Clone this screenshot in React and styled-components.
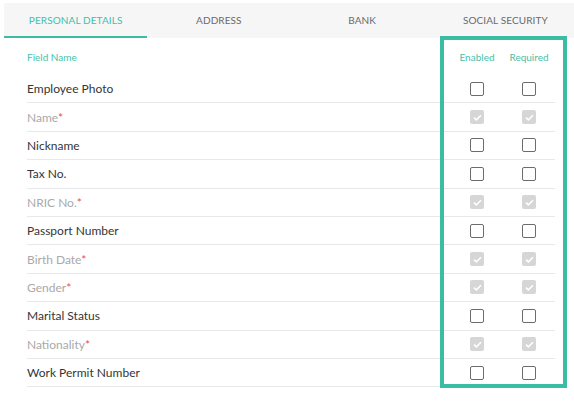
import styled, { createGlobalStyle } from "styled-components";

const GlobalStyle = createGlobalStyle`
  html, body {
    margin: 0;
    padding: 0;
    background: #ffffff;
    overflow: hidden;
  }
  body {
    font-family: Lato, "Noto Sans", sans-serif;
  }
`;

const Page = styled.div`
  position: relative;
  width: 574px;
  height: 401px;
  padding: 3px 0 0 4px;
  box-sizing: border-box;
`;

const TabBar = styled.div`
  display: flex;
  width: 573px;
  height: 35px;
  background: #f6f6f6;
`;

const Tab = styled.div`
  flex: 1;
  display: flex;
  align-items: center;
  justify-content: center;
  font-size: 10px;
  letter-spacing: 0.1px;
  text-transform: uppercase;
  color: ${({ $active }) => ($active ? "#3fc0a8" : "#6a6a6a")};
  border-bottom: 2px solid ${({ $active }) => ($active ? "#3bbca5" : "transparent")};
  box-sizing: border-box;
`;

const Table = styled.div`
  margin: 0 19px 0 23px;
`;

const HeaderRow = styled.div`
  display: grid;
  grid-template-columns: 1fr 52px 52px;
  align-items: center;
  height: 37px;
  font-size: 10px;
  color: #45c1aa;
`;

const HeadCell = styled.div`
  text-align: ${({ $center }) => ($center ? "center" : "left")};
`;

const Row = styled.div`
  display: grid;
  grid-template-columns: 1fr 52px 52px;
  align-items: center;
  height: 28.4px;
  box-sizing: border-box;
  border-bottom: 1px solid #e6e8ec;
`;

const Label = styled.div`
  font-size: 12px;
  color: ${({ $mandatory }) => ($mandatory ? "#a9a9a9" : "#353535")};
`;

const Star = styled.span`
  color: #f04d4d;
`;

const Cell = styled.div`
  display: flex;
  justify-content: center;
`;

const Box = styled.div`
  width: 14px;
  height: 14px;
  box-sizing: border-box;
  border-radius: 2px;
  border: ${({ $locked }) => ($locked ? "none" : "1.5px solid #6c6c6c")};
  background: ${({ $locked }) => ($locked ? "#d6d6d6" : "#ffffff")};
  display: flex;
  align-items: center;
  justify-content: center;
`;

const Highlight = styled.div`
  position: absolute;
  left: 440px;
  top: 36px;
  width: 127px;
  height: 352px;
  box-sizing: border-box;
  border: 4px solid #3bbca5;
  pointer-events: none;
`;

const fields = [
  { name: "Employee Photo" },
  { name: "Name", mandatory: true },
  { name: "Nickname" },
  { name: "Tax No." },
  { name: "NRIC No.", mandatory: true },
  { name: "Passport Number" },
  { name: "Birth Date", mandatory: true },
  { name: "Gender", mandatory: true },
  { name: "Marital Status" },
  { name: "Nationality", mandatory: true },
  { name: "Work Permit Number" },
];

const Check = ({ locked }) => (
  <Box $locked={locked}>
    {locked && (
      <svg width="9" height="7" viewBox="0 0 9 7">
        <path d="M1 3.6 L3.4 5.8 L8 1.2" fill="none" stroke="#ffffff" strokeWidth="1.6" />
      </svg>
    )}
  </Box>
);

export default function App() {
  return (
    <Page>
      <GlobalStyle />
      <TabBar>
        <Tab $active>Personal Details</Tab>
        <Tab>Address</Tab>
        <Tab>Bank</Tab>
        <Tab>Social Security</Tab>
      </TabBar>
      <Table>
        <HeaderRow>
          <HeadCell>Field Name</HeadCell>
          <HeadCell $center>Enabled</HeadCell>
          <HeadCell $center>Required</HeadCell>
        </HeaderRow>
        {fields.map((f) => (
          <Row key={f.name}>
            <Label $mandatory={f.mandatory}>
              {f.name}
              {f.mandatory && <Star>*</Star>}
            </Label>
            <Cell>
              <Check locked={f.mandatory} />
            </Cell>
            <Cell>
              <Check locked={f.mandatory} />
            </Cell>
          </Row>
        ))}
      </Table>
      <Highlight />
    </Page>
  );
}
